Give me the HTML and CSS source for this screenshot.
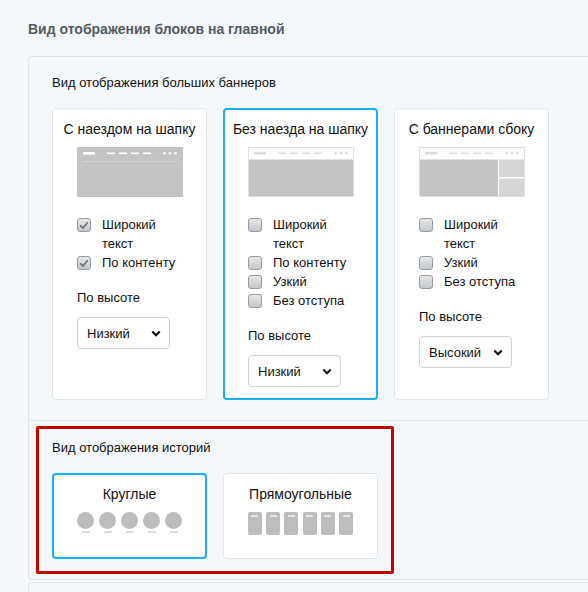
FILE: index.html
```html
<!DOCTYPE html>
<html lang="ru">
<head>
    <meta charset="UTF-8">
    <meta name="viewport" content="width=device-width, initial-scale=1.0">
    <title>Вид отображения блоков</title>
    <link rel="stylesheet" href="styles.css">
</head>
<body>

    <div class="page">
        <h2 class="page-title">Вид отображения блоков на главной</h2>

        <div class="panel">

            <!-- большие баннеры -->
            <div class="panel-row">
                <div class="row-title">Вид отображения больших баннеров</div>
                <div class="cards">

                    <div class="card">
                        <div class="card-title">С наездом на шапку</div>
                        <svg class="thumb" width="106" height="50" viewBox="0 0 106 50">
                            <rect width="106" height="50" fill="#c4c4c4"/>
                            <rect x="6" y="5" width="12" height="2.6" fill="#fff"/>
                            <rect x="30" y="5.5" width="8" height="1.6" fill="#fff"/>
                            <rect x="42" y="5.5" width="8" height="1.6" fill="#fff"/>
                            <rect x="54" y="5.5" width="8" height="1.6" fill="#fff"/>
                            <rect x="66" y="5.5" width="8" height="1.6" fill="#fff"/>
                            <circle cx="87.5" cy="6.3" r="1.3" fill="#fff"/>
                            <circle cx="93" cy="6.3" r="1.3" fill="#fff"/>
                            <circle cx="98.5" cy="6.3" r="1.3" fill="#fff"/>
                            <rect x="6" y="14" width="94" height="1" fill="#d4d4d4"/>
                        </svg>
                        <div class="checks">
                            <label class="check"><span class="box checked"><svg width="14" height="14" viewBox="0 0 14 14"><path d="M3.2 7.4 L5.9 10 L10.8 4.2" fill="none" stroke="#6c7176" stroke-width="1.7"/></svg></span><span>Широкий текст</span></label>
                            <label class="check"><span class="box checked"><svg width="14" height="14" viewBox="0 0 14 14"><path d="M3.2 7.4 L5.9 10 L10.8 4.2" fill="none" stroke="#6c7176" stroke-width="1.7"/></svg></span><span>По контенту</span></label>
                        </div>
                        <div class="field-label">По высоте</div>
                        <div class="select"><span>Низкий</span><svg width="10" height="7" viewBox="0 0 10 7"><path d="M1.3 1.5 L5 5.2 L8.7 1.5" fill="none" stroke="#111" stroke-width="2.2"/></svg></div>
                    </div>

                    <div class="card active">
                        <div class="card-title">Без наезда на шапку</div>
                        <svg class="thumb" width="106" height="50" viewBox="0 0 106 50">
                            <rect x="0.5" y="0.5" width="105" height="49" fill="#fff" stroke="#e0e0e0"/>
                            <rect x="6" y="5" width="12" height="2.6" fill="#dcdcdc"/>
                            <rect x="30" y="5.5" width="8" height="1.6" fill="#dcdcdc"/>
                            <rect x="42" y="5.5" width="8" height="1.6" fill="#dcdcdc"/>
                            <rect x="54" y="5.5" width="8" height="1.6" fill="#dcdcdc"/>
                            <rect x="66" y="5.5" width="8" height="1.6" fill="#dcdcdc"/>
                            <circle cx="87.5" cy="6.3" r="1.3" fill="#dcdcdc"/>
                            <circle cx="93" cy="6.3" r="1.3" fill="#dcdcdc"/>
                            <circle cx="98.5" cy="6.3" r="1.3" fill="#dcdcdc"/>
                            <rect x="1" y="12.5" width="104" height="36.5" fill="#c4c4c4"/>
                        </svg>
                        <div class="checks">
                            <label class="check"><span class="box"></span><span>Широкий текст</span></label>
                            <label class="check"><span class="box"></span><span>По контенту</span></label>
                            <label class="check"><span class="box"></span><span>Узкий</span></label>
                            <label class="check"><span class="box"></span><span>Без отступа</span></label>
                        </div>
                        <div class="field-label">По высоте</div>
                        <div class="select"><span>Низкий</span><svg width="10" height="7" viewBox="0 0 10 7"><path d="M1.3 1.5 L5 5.2 L8.7 1.5" fill="none" stroke="#111" stroke-width="2.2"/></svg></div>
                    </div>

                    <div class="card">
                        <div class="card-title">С баннерами сбоку</div>
                        <svg class="thumb" width="106" height="50" viewBox="0 0 106 50">
                            <rect x="0.5" y="0.5" width="105" height="49" fill="#fff" stroke="#e0e0e0"/>
                            <rect x="6" y="5" width="12" height="2.6" fill="#dcdcdc"/>
                            <rect x="30" y="5.5" width="8" height="1.6" fill="#dcdcdc"/>
                            <rect x="42" y="5.5" width="8" height="1.6" fill="#dcdcdc"/>
                            <rect x="54" y="5.5" width="8" height="1.6" fill="#dcdcdc"/>
                            <rect x="66" y="5.5" width="8" height="1.6" fill="#dcdcdc"/>
                            <circle cx="87.5" cy="6.3" r="1.3" fill="#dcdcdc"/>
                            <circle cx="93" cy="6.3" r="1.3" fill="#dcdcdc"/>
                            <circle cx="98.5" cy="6.3" r="1.3" fill="#dcdcdc"/>
                            <rect x="1" y="12.5" width="78" height="36.5" fill="#c4c4c4"/>
                            <rect x="80" y="12.5" width="25" height="17.5" fill="#d6d6d6"/>
                            <rect x="80" y="31.5" width="25" height="17.5" fill="#d6d6d6"/>
                        </svg>
                        <div class="checks">
                            <label class="check"><span class="box"></span><span>Широкий текст</span></label>
                            <label class="check"><span class="box"></span><span>Узкий</span></label>
                            <label class="check"><span class="box"></span><span>Без отступа</span></label>
                        </div>
                        <div class="field-label">По высоте</div>
                        <div class="select"><span>Высокий</span><svg width="10" height="7" viewBox="0 0 10 7"><path d="M1.3 1.5 L5 5.2 L8.7 1.5" fill="none" stroke="#111" stroke-width="2.2"/></svg></div>
                    </div>

                </div>
            </div>

            <!-- истории -->
            <div class="panel-row stories-row">
                <div class="highlight"></div>
                <div class="row-title">Вид отображения историй</div>
                <div class="cards">
                    <div class="card story-card active">
                        <div class="card-title">Круглые</div>
                        <div class="story-preview">
                            <div class="dot"></div>
                            <div class="dot"></div>
                            <div class="dot"></div>
                            <div class="dot"></div>
                            <div class="dot"></div>
                        </div>
                    </div>
                    <div class="card story-card">
                        <div class="card-title">Прямоугольные</div>
                        <div class="story-preview rects">
                            <div class="tile"></div>
                            <div class="tile"></div>
                            <div class="tile"></div>
                            <div class="tile"></div>
                            <div class="tile"></div>
                            <div class="tile"></div>
                        </div>
                    </div>
                </div>
            </div>

        </div>

        <div class="panel next"></div>
    </div>

</body>
</html>
```

FILE: styles.css
```css
body {
    margin: 0;
    background-color: #f5f8fa;
    font-family: "Liberation Sans", Arial, sans-serif;
    color: #111;
}

.page {
    padding: 20px 0 0 28px;
}

.page-title {
    margin: 0 0 18px;
    font-size: 14px;
    line-height: 18px;
    font-weight: bold;
    color: #535b63;
}

.panel {
    border: 1px solid #dce4ea;
    border-right: none;
    border-radius: 4px 0 0 4px;
}

.panel.next {
    margin-top: 2px;
    height: 40px;
}

.panel-row {
    padding: 17px 0 20px 23px;
}

.panel-row + .panel-row {
    border-top: 1px solid #dce4ea;
}

.row-title {
    font-size: 13px;
    line-height: 18px;
    margin-bottom: 16px;
}

.cards {
    display: flex;
    gap: 16px;
}

.card {
    box-sizing: border-box;
    width: 155px;
    background: #ffffff;
    border: 1px solid #dee6ec;
    border-radius: 4px;
    padding: 11px 22px 12px 24px;
}

.card.active {
    border: 2px solid #19aff0;
    padding: 10px 21px 11px 23px;
}

.card-title {
    margin: 0 -21px 0 -23px;
    font-size: 14px;
    line-height: 18px;
    text-align: center;
    white-space: nowrap;
}

.thumb {
    display: block;
    margin: 9px 0 0 0;
}

.checks {
    margin-top: 18px;
}

.check {
    display: flex;
    gap: 11px;
    font-size: 13px;
    line-height: 19px;
}

.box {
    flex: none;
    box-sizing: border-box;
    width: 14px;
    height: 14px;
    margin-top: 2.5px;
    border: 1px solid #979ca1;
    border-radius: 3px;
    background: linear-gradient(#e6e8ea, #c3c7cb);
}

.box svg {
    display: block;
    margin: -1px;
}

.field-label {
    margin-top: 17px;
    font-size: 13px;
    line-height: 18px;
}

.select {
    box-sizing: border-box;
    width: 93px;
    height: 32px;
    margin-top: 10px;
    padding: 0 8px 0 9px;
    display: flex;
    align-items: center;
    justify-content: space-between;
    border: 1px solid #cbd3db;
    border-radius: 4px;
    font-size: 13px;
    background: #fff;
}

.select svg {
    display: block;
}

/* истории */
.stories-row {
    position: relative;
    padding-top: 18px;
}

.highlight {
    position: absolute;
    left: 7px;
    top: 5px;
    width: 358px;
    height: 148px;
    box-sizing: border-box;
    border: 3px solid #c20000;
    border-radius: 2px;
}

.story-card {
    padding: 11px 23px 23px;
}

.story-card.active {
    padding: 10px 22px 22px;
}

.story-card .card-title {
    margin: 0 -20px;
}

.story-preview {
    display: flex;
    justify-content: center;
    gap: 5px;
    height: 23px;
    margin-top: 9px;
}

.dot {
    position: relative;
    width: 17px;
    height: 17px;
    border-radius: 50%;
    background: #bdbdbd;
}

.dot::after {
    content: "";
    position: absolute;
    left: 4.5px;
    top: 19px;
    width: 8px;
    height: 1.5px;
    background: #dcdcdc;
}

.rects {
    gap: 4.3px;
}

.tile {
    position: relative;
    width: 14px;
    height: 23px;
    border-radius: 2px;
    background: #bdbdbd;
}

.tile::before {
    content: "";
    position: absolute;
    left: 3.5px;
    top: 3px;
    width: 7px;
    height: 1.5px;
    background: #e6e6e6;
}
```
